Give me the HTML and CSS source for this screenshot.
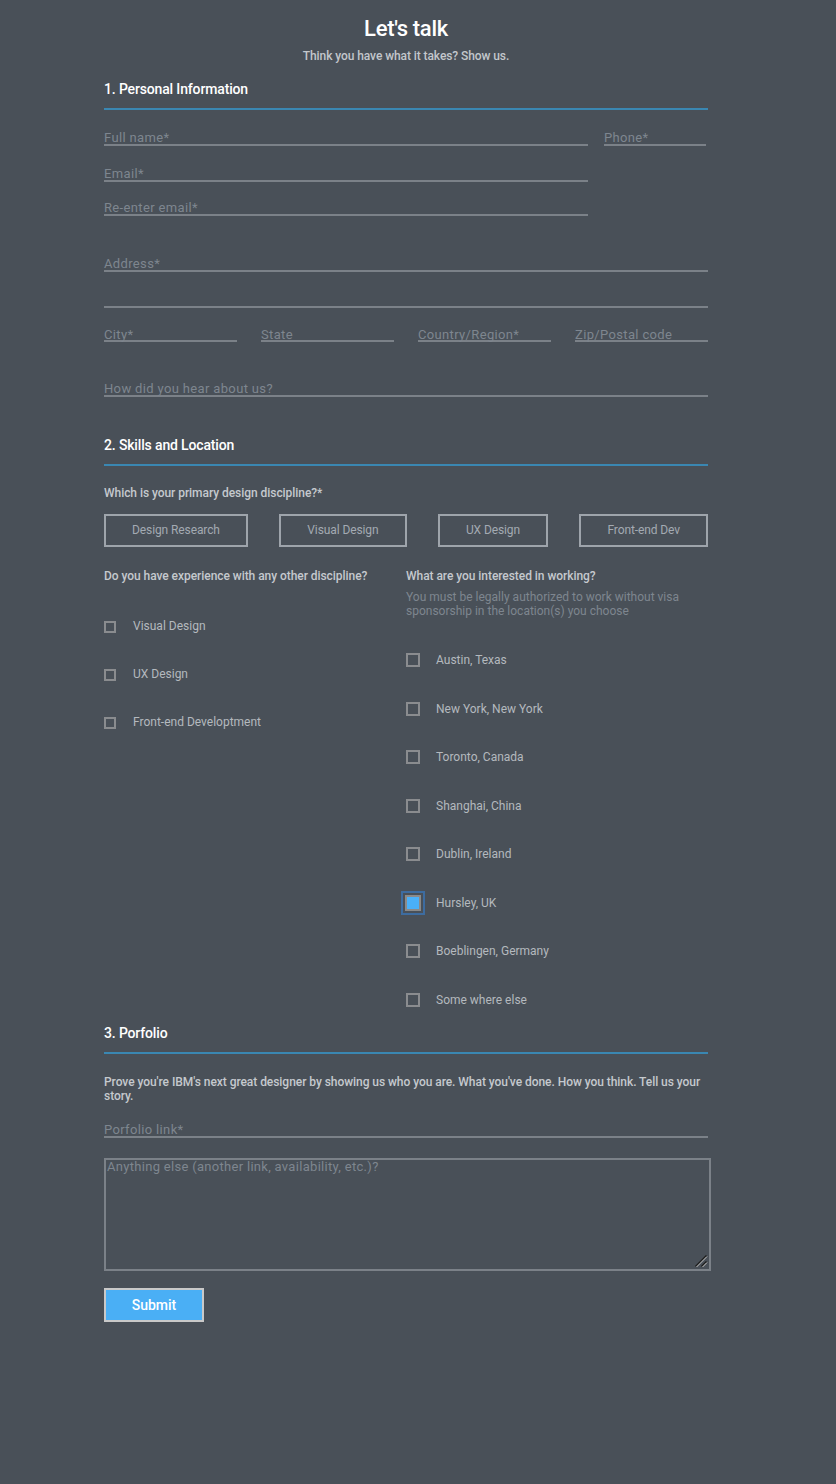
FILE: index.html
```html
<!DOCTYPE html>
<html lang="en">
<head>
<meta charset="utf-8">
<title>Let's talk</title>
<link rel="stylesheet" href="styles.css">
</head>
<body>
<main class="page">
  <header class="intro">
    <h1 class="title">Let's talk</h1>
    <p class="subtitle">Think you have what it takes? Show us.</p>
  </header>

  <section class="section">
    <h2 class="section-title">1. Personal Information</h2>
    <div class="row row-first">
      <div class="field field-wide">Full name*</div>
      <div class="field field-phone">Phone*</div>
    </div>
    <div class="row row-18"><div class="field field-wide">Email*</div></div>
    <div class="row row-16"><div class="field field-wide">Re-enter email*</div></div>
    <div class="row row-38"><div class="field field-full">Address*</div></div>
    <div class="row row-18"><div class="field field-full"></div></div>
    <div class="row row-16 quad">
      <div class="field field-low">City*</div>
      <div class="field field-low">State</div>
      <div class="field field-low">Country/Region*</div>
      <div class="field field-low">Zip/Postal code</div>
    </div>
    <div class="row row-37"><div class="field field-full">How did you hear about us?</div></div>
  </section>

  <section class="section section-2">
    <h2 class="section-title">2. Skills and Location</h2>
    <p class="question q-primary">Which is your primary design discipline?*</p>
    <div class="choices">
      <button class="choice" type="button">Design Research</button>
      <button class="choice" type="button">Visual Design</button>
      <button class="choice" type="button">UX Design</button>
      <button class="choice" type="button">Front-end Dev</button>
    </div>
    <div class="columns">
      <div class="col">
        <p class="question">Do you have experience with any other discipline?</p>
        <ul class="checks checks-left">
          <li class="check"><span class="box box-sm"></span><span>Visual Design</span></li>
          <li class="check"><span class="box box-sm"></span><span>UX Design</span></li>
          <li class="check"><span class="box box-sm"></span><span>Front-end Developtment</span></li>
        </ul>
      </div>
      <div class="col">
        <p class="question">What are you interested in working?</p>
        <p class="hint">You must be legally authorized to work without visa sponsorship in the location(s) you choose</p>
        <ul class="checks checks-right">
          <li class="check"><span class="box"></span><span>Austin, Texas</span></li>
          <li class="check"><span class="box"></span><span>New York, New York</span></li>
          <li class="check"><span class="box"></span><span>Toronto, Canada</span></li>
          <li class="check"><span class="box"></span><span>Shanghai, China</span></li>
          <li class="check"><span class="box"></span><span>Dublin, Ireland</span></li>
          <li class="check"><span class="box box-checked"></span><span>Hursley, UK</span></li>
          <li class="check"><span class="box"></span><span>Boeblingen, Germany</span></li>
          <li class="check"><span class="box"></span><span>Some where else</span></li>
        </ul>
      </div>
    </div>
  </section>

  <section class="section section-3">
    <h2 class="section-title">3. Porfolio</h2>
    <p class="question prove">Prove you're IBM's next great designer by showing us who you are. What you've done. How you think. Tell us your story.</p>
    <div class="row row-17"><div class="field field-full">Porfolio link*</div></div>
    <div class="textarea">
      <span class="ta-placeholder">Anything else (another link, availability, etc.)?</span>
      <svg class="grip" width="14" height="14" viewBox="0 0 14 14" aria-hidden="true">
        <path d="M1.5 12.5 L12.5 1.5" stroke="#1e1e1e" stroke-width="1.6"/>
        <path d="M2.5 13 L13 2.5" stroke="#c9c9c9" stroke-width="1"/>
        <path d="M7.5 12.5 L12.5 7.5" stroke="#1e1e1e" stroke-width="1.6"/>
        <path d="M8.5 13 L13 8.5" stroke="#c9c9c9" stroke-width="1"/>
      </svg>
    </div>
    <button class="submit" type="button">Submit</button>
  </section>
</main>
</body>
</html>
```

FILE: styles.css
```css
html {
  background: #495058;
}
body {
  margin: 0;
  background: #495058;
  font-family: Roboto, "Liberation Sans", Arial, sans-serif;
  min-height: 1484px;
}
.page {
  width: 604px;
  margin-left: 104px;
  padding-top: 14px;
}
.intro {
  text-align: center;
}
.title {
  margin: 0;
  font-size: 22px;
  line-height: 30px;
  font-weight: 500;
  color: #ffffff;
  letter-spacing: -0.3px;
}
.subtitle {
  margin: 4px 0 0;
  font-size: 12px;
  line-height: 16px;
  font-weight: 500;
  color: #c3c7cc;
  letter-spacing: -0.08px;
}
.section {
  margin-top: 15px;
}
.section-2 {
  margin-top: 38px;
}
.section-3 {
  margin-top: 15px;
}
.section-title {
  margin: 0;
  font-size: 14px;
  line-height: 20px;
  font-weight: 500;
  color: #ffffff;
  letter-spacing: -0.15px;
  padding-bottom: 9px;
  border-bottom: 2px solid #3a87b2;
}
.row {
  display: flex;
  gap: 16px;
}
.row-first { margin-top: 18px; }
.row-16 { margin-top: 16px; }
.row-17 { margin-top: 17px; }
.row-18 { margin-top: 18px; }
.row-37 { margin-top: 37px; }
.row-38 { margin-top: 38px; }
.field {
  height: 14px;
  padding-top: 2px;
  line-height: 16px;
  font-size: 13px;
  color: #7e868f;
  letter-spacing: 0.35px;
  border-bottom: 2px solid #7b8188;
  white-space: nowrap;
}
.field-low {
  height: 13px;
  padding-top: 3px;
}
.field-wide { width: 484px; }
.field-phone { width: 102px; }
.field-full { width: 604px; }
.quad {
  display: grid;
  grid-template-columns: repeat(4, 1fr);
  column-gap: 24px;
}
.question {
  margin: 0;
  font-size: 12px;
  line-height: 16px;
  font-weight: 500;
  color: #c5c9ce;
  letter-spacing: -0.05px;
}
.q-primary {
  margin-top: 19px;
}
.choices {
  display: flex;
  justify-content: space-between;
  margin-top: 13px;
}
.choice {
  height: 33px;
  padding: 0 26px;
  background: transparent;
  border: 2px solid #9ea4ab;
  color: #a3aab2;
  font-family: Roboto, "Liberation Sans", Arial, sans-serif;
  font-size: 12px;
  font-weight: 400;
  line-height: 29px;
  letter-spacing: -0.1px;
}
.columns {
  display: grid;
  grid-template-columns: 302px 302px;
  margin-top: 21px;
}
.hint {
  margin: 6px 0 0;
  font-size: 12px;
  line-height: 14px;
  color: #7e868f;
  padding-right: 20px;
}
.checks {
  list-style: none;
  margin: 34px 0 0;
  padding: 0;
  display: flex;
  flex-direction: column;
  gap: 32px;
}
.checks-right {
  gap: 32.57px;
}
.check {
  display: flex;
  align-items: center;
  height: 16px;
  gap: 16px;
  font-size: 12px;
  color: #b4b9be;
}
.checks-left .check {
  gap: 17px;
}
.box {
  box-sizing: border-box;
  width: 14px;
  height: 14px;
  border: 2px solid #8a8c8f;
  flex: none;
}
.box-sm {
  width: 12px;
  height: 12px;
  margin-top: 2px;
}
.box-checked {
  width: 16px;
  height: 16px;
  margin: 0 -1px;
  background: #4ab0f8;
  border-color: #8a8a8a;
  outline: 2px solid #3d6ca0;
  outline-offset: 2px;
}
.prove {
  margin-top: 21px;
  line-height: 14px;
}
.textarea {
  position: relative;
  box-sizing: border-box;
  width: 607px;
  height: 113px;
  margin-top: 20px;
  border: 2px solid #7b8188;
  padding: 0 1px;
}
.ta-placeholder {
  display: block;
  font-size: 13px;
  line-height: 13px;
  color: #7e868f;
  letter-spacing: 0.3px;
}
.grip {
  position: absolute;
  right: 1px;
  bottom: 1px;
}
.submit {
  display: block;
  margin-top: 17px;
  width: 100px;
  height: 34px;
  background: #4aaff5;
  border: 2px solid #c9c9c9;
  color: #ffffff;
  font-family: Roboto, "Liberation Sans", Arial, sans-serif;
  font-size: 14px;
  font-weight: 500;
  padding: 0;
}
```
